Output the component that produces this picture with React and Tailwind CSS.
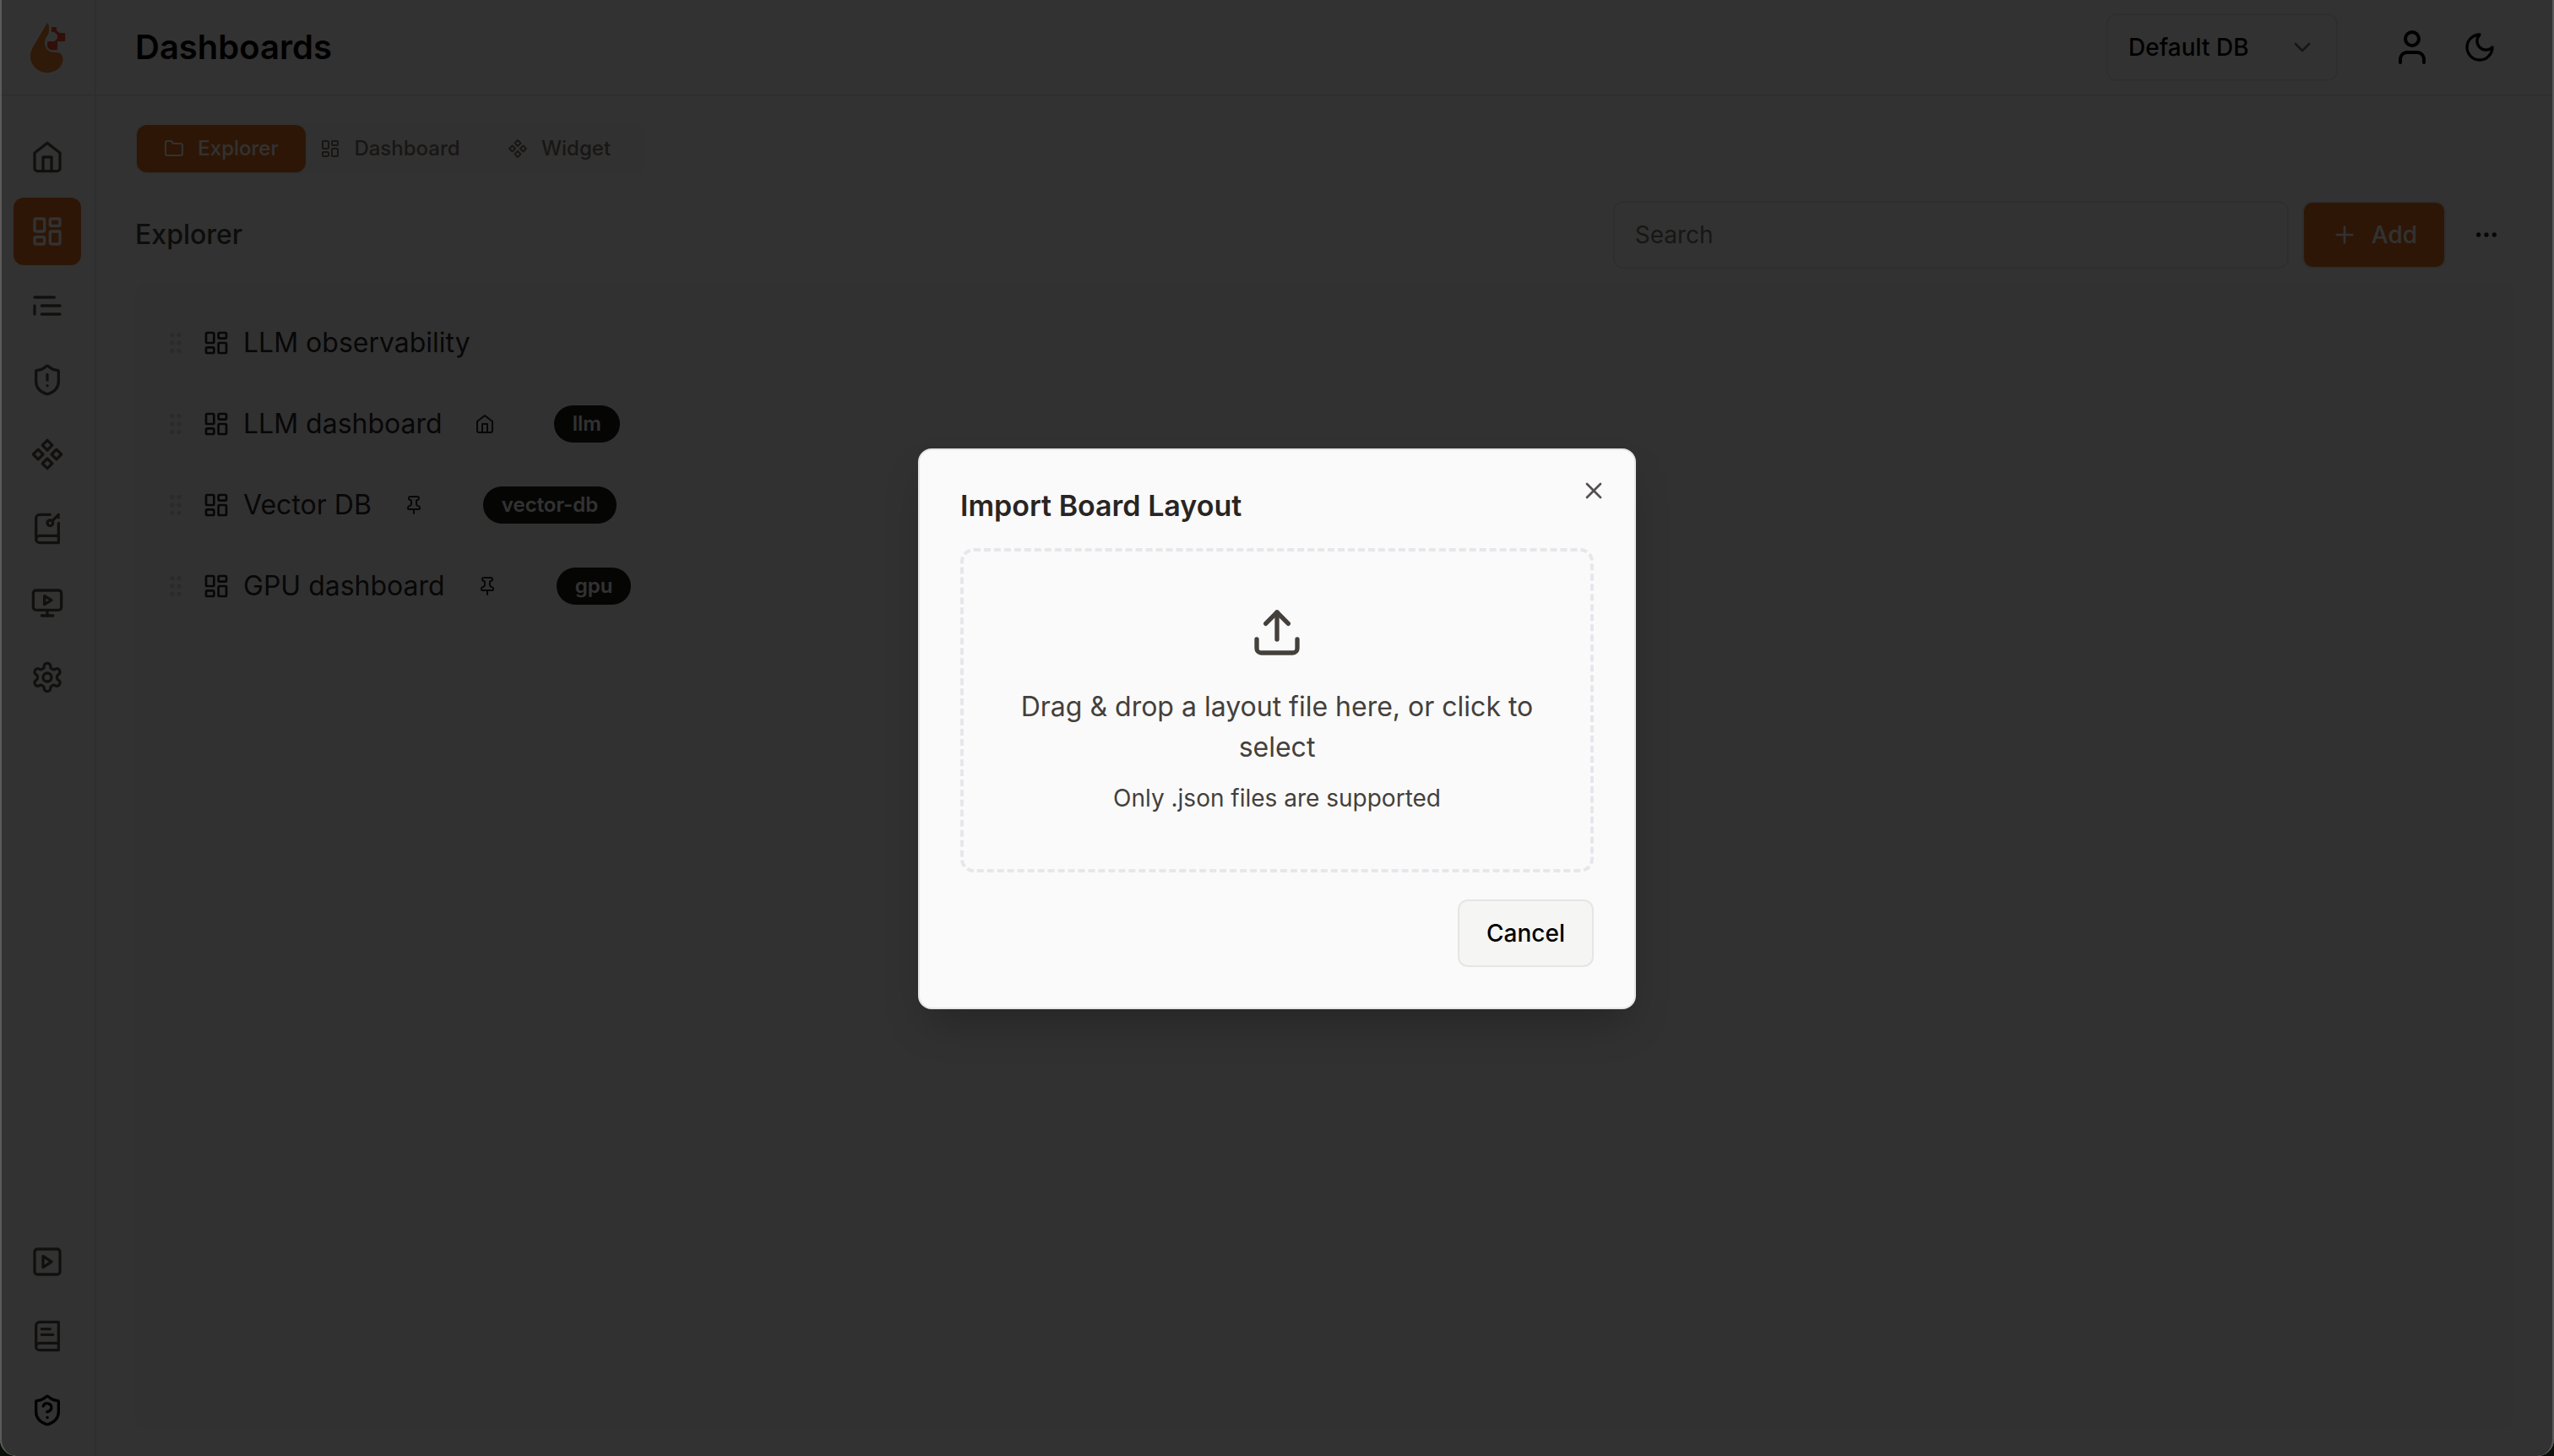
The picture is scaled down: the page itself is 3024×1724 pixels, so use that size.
import React from "react";

function Icon({ className = "size-10", children }) {
  return (
    <svg
      viewBox="0 0 24 24"
      fill="none"
      stroke="currentColor"
      strokeWidth="2"
      strokeLinecap="round"
      strokeLinejoin="round"
      aria-hidden="true"
      className={`shrink-0 ${className}`}
    >
      {children}
    </svg>
  );
}

const shield =
  "M20 13c0 5-3.5 7.5-7.66 8.95a1 1 0 0 1-.67-.01C7.5 20.5 4 18 4 13V6a1 1 0 0 1 1-1c2 0 4.5-1.2 6.24-2.72a1.17 1.17 0 0 1 1.52 0C14.51 3.81 17 5 19 5a1 1 0 0 1 1 1z";

const shapes = {
  home: (
    <>
      <path d="m3 9 9-7 9 7v11a2 2 0 0 1-2 2H5a2 2 0 0 1-2-2z" />
      <polyline points="9 22 9 12 15 12 15 22" />
    </>
  ),
  dashboard: (
    <>
      <rect width="7" height="9" x="3" y="3" rx="1" />
      <rect width="7" height="5" x="14" y="3" rx="1" />
      <rect width="7" height="9" x="14" y="12" rx="1" />
      <rect width="7" height="5" x="3" y="16" rx="1" />
    </>
  ),
  requests: (
    <>
      <path d="M17 6H3" />
      <path d="M21 12H8" />
      <path d="M21 18H8" />
      <path d="M3 12v6" />
    </>
  ),
  shieldAlert: (
    <>
      <path d={shield} />
      <path d="M12 8v4" />
      <path d="M12 16h.01" />
    </>
  ),
  component: (
    <>
      <path d="M5.5 8.5 9 12l-3.5 3.5L2 12l3.5-3.5Z" />
      <path d="m12 2 3.5 3.5L12 9 8.5 5.5 12 2Z" />
      <path d="M18.5 8.5 22 12l-3.5 3.5L15 12l3.5-3.5Z" />
      <path d="m12 15 3.5 3.5L12 22l-3.5-3.5L12 15Z" />
    </>
  ),
  bookKey: (
    <>
      <path d="m19 3 1 1" />
      <path d="m20 2-4.5 4.5" />
      <path d="M20 8v14H6.5a2.5 2.5 0 0 1 0-5H20" />
      <path d="M4 19.5v-15A2.5 2.5 0 0 1 6.5 2H14" />
      <circle cx="14" cy="8" r="2" />
    </>
  ),
  monitorPlay: (
    <>
      <path d="m10 7 5 3-5 3Z" />
      <rect width="20" height="14" x="2" y="3" rx="2" />
      <path d="M12 17v4" />
      <path d="M8 21h8" />
    </>
  ),
  settings: (
    <>
      <path d="M12.22 2h-.44a2 2 0 0 0-2 2v.18a2 2 0 0 1-1 1.73l-.43.25a2 2 0 0 1-2 0l-.15-.08a2 2 0 0 0-2.73.73l-.22.38a2 2 0 0 0 .73 2.73l.15.1a2 2 0 0 1 1 1.72v.51a2 2 0 0 1-1 1.74l-.15.09a2 2 0 0 0-.73 2.73l.22.38a2 2 0 0 0 2.73.73l.15-.08a2 2 0 0 1 2 0l.43.25a2 2 0 0 1 1 1.73V20a2 2 0 0 0 2 2h.44a2 2 0 0 0 2-2v-.18a2 2 0 0 1 1-1.73l.43-.25a2 2 0 0 1 2 0l.15.08a2 2 0 0 0 2.73-.73l.22-.39a2 2 0 0 0-.73-2.73l-.15-.08a2 2 0 0 1-1-1.74v-.5a2 2 0 0 1 1-1.74l.15-.09a2 2 0 0 0 .73-2.73l-.22-.38a2 2 0 0 0-2.73-.73l-.15.08a2 2 0 0 1-2 0l-.43-.25a2 2 0 0 1-1-1.73V4a2 2 0 0 0-2-2z" />
      <circle cx="12" cy="12" r="3" />
    </>
  ),
  squarePlay: (
    <>
      <rect width="18" height="18" x="3" y="3" rx="2" />
      <path d="m9 8 6 4-6 4Z" />
    </>
  ),
  bookText: (
    <>
      <path d="M4 19.5v-15A2.5 2.5 0 0 1 6.5 2H20v20H6.5a2.5 2.5 0 0 1 0-5H20" />
      <path d="M8 7h6" />
      <path d="M8 11h8" />
    </>
  ),
  shieldQuestion: (
    <>
      <path d={shield} />
      <path d="M9.1 9a3 3 0 0 1 5.82 1c0 2-3 3-3 3" />
      <path d="M12 17h.01" />
    </>
  ),
  folder: (
    <path d="M20 20a2 2 0 0 0 2-2V8a2 2 0 0 0-2-2h-7.9a2 2 0 0 1-1.69-.9L9.6 3.9A2 2 0 0 0 7.93 3H4a2 2 0 0 0-2 2v13a2 2 0 0 0 2 2Z" />
  ),
  user: (
    <>
      <path d="M19 21v-2a4 4 0 0 0-4-4H9a4 4 0 0 0-4 4v2" />
      <circle cx="12" cy="7" r="4" />
    </>
  ),
  moon: <path d="M12 3a6 6 0 0 0 9 9 9 9 0 1 1-9-9Z" />,
  chevron: <path d="m6 9 6 6 6-6" />,
  plus: (
    <>
      <path d="M5 12h14" />
      <path d="M12 5v14" />
    </>
  ),
  ellipsis: (
    <>
      <circle cx="12" cy="12" r="1" />
      <circle cx="19" cy="12" r="1" />
      <circle cx="5" cy="12" r="1" />
    </>
  ),
  grip: (
    <>
      <circle cx="9" cy="12" r="1" />
      <circle cx="9" cy="5" r="1" />
      <circle cx="9" cy="19" r="1" />
      <circle cx="15" cy="12" r="1" />
      <circle cx="15" cy="5" r="1" />
      <circle cx="15" cy="19" r="1" />
    </>
  ),
  pin: (
    <>
      <path d="M12 17v5" />
      <path d="M9 10.76a2 2 0 0 1-1.11 1.79l-1.78.9A2 2 0 0 0 5 15.24V16a1 1 0 0 0 1 1h12a1 1 0 0 0 1-1v-.76a2 2 0 0 0-1.11-1.79l-1.78-.9A2 2 0 0 1 15 10.76V7a1 1 0 0 1 1-1 2 2 0 0 0 0-4H8a2 2 0 0 0 0 4 1 1 0 0 1 1 1z" />
    </>
  ),
  upload: (
    <>
      <path d="M21 15v4a2 2 0 0 1-2 2H5a2 2 0 0 1-2-2v-4" />
      <polyline points="17 8 12 3 7 8" />
      <path d="M12 3v12" />
    </>
  ),
  close: (
    <>
      <path d="M18 6 6 18" />
      <path d="m6 6 12 12" />
    </>
  ),
};

function Logo() {
  return (
    <svg viewBox="0 0 80 80" className="size-20" role="img" aria-label="Logo">
      <path
        fill="#e87c2c"
        d="M40 11c1 1.5 2 3 2 5 0 4 .2 6-1 8.5-1.5 3-4 5.5-4 10 0 7 4.500 11.500 11 11.500h2.500c5 0 8 3.500 8 8C58.500 63 50 70 40 70c-11 0-20-8.500-20-19.500 0-5.500 2.200-9.500 5-14z"
      />
      <path
        fill="#f0502c"
        d="M46 16h4c.6 0 1 .4 1 1v3l3.500 3H60c.7 0 1.200.5 1.200 1.200v7.600c0 .7-.5 1.200-1.200 1.200h-8v9c0 .7-.5 1.200-1.200 1.200H46c-3.500 0-6-2.500-6-5.500v-3.500c0-.7.5-1.200 1.200-1.200h7.300l3.500-3.500v-4L48.500 22H46c-.6 0-1-.4-1-1v-4c0-.6.4-1 1-1z"
      />
    </svg>
  );
}

const mainNav = [
  ["Home", "home"],
  ["Dashboards", "dashboard"],
  ["Requests", "requests"],
  ["Exceptions", "shieldAlert"],
  ["Prompt hub", "component"],
  ["Vault", "bookKey"],
  ["Playground", "monitorPlay"],
  ["Settings", "settings"],
];

const footerNav = [
  ["Getting started", "squarePlay", "text-stone-600"],
  ["Documentation", "bookText", "text-stone-600"],
  ["Support", "shieldQuestion", "text-stone-950"],
];

function NavLink({ label, icon, className }) {
  return (
    <a
      href="#"
      aria-label={label}
      className={`flex size-20 items-center justify-center rounded-xl ${className}`}
    >
      <Icon>{shapes[icon]}</Icon>
    </a>
  );
}

function Sidebar() {
  return (
    <aside className="flex w-[114px] shrink-0 flex-col items-center border-r-2 border-stone-200">
      <div className="flex h-[114px] w-full shrink-0 items-center justify-center border-b-2 border-stone-200">
        <Logo />
      </div>
      <nav aria-label="Main" className="flex flex-1 flex-col gap-2 pt-8">
        {mainNav.map(([label, icon]) => (
          <NavLink
            key={label}
            label={label}
            icon={icon}
            className={label === "Dashboards" ? "bg-[#e17020] text-neutral-50" : "text-stone-600"}
          />
        ))}
      </nav>
      <nav aria-label="Help" className="flex flex-col gap-2 pb-3.5">
        {footerNav.map(([label, icon, className]) => (
          <NavLink key={label} label={label} icon={icon} className={className} />
        ))}
      </nav>
    </aside>
  );
}

function Header() {
  return (
    <header className="flex h-[114px] shrink-0 items-center border-b-2 border-stone-200 pr-12 pl-[46px]">
      <h1 className="flex-1 text-[40px] leading-[56px] font-semibold text-black">Dashboards</h1>
      <div className="relative">
        <select
          aria-label="Database"
          className="h-20 w-[274px] appearance-none rounded-xl border-2 border-stone-200 bg-transparent px-6 text-[28px] font-medium text-black"
        >
          <option>Default DB</option>
        </select>
        <span className="pointer-events-none absolute inset-y-0 right-[26px] flex items-center text-stone-500">
          <Icon className="size-8">{shapes.chevron}</Icon>
        </span>
      </div>
      <div className="ml-12 flex">
        <button type="button" aria-label="Account" className="flex size-20 items-center justify-center text-black">
          <Icon className="size-12">{shapes.user}</Icon>
        </button>
        <button type="button" aria-label="Toggle theme" className="flex size-20 items-center justify-center text-black">
          <Icon>{shapes.moon}</Icon>
        </button>
      </div>
    </header>
  );
}

const tabs = [
  ["Explorer", "folder"],
  ["Dashboard", "dashboard"],
  ["Widget", "component"],
];

function Tabs() {
  return (
    <div role="tablist" className="grid w-[604px] grid-cols-3 rounded-xl bg-stone-100 p-0.5">
      {tabs.map(([label, icon], i) => (
        <button
          key={label}
          type="button"
          role="tab"
          aria-selected={i === 0}
          className={`flex h-14 items-center justify-center gap-4 rounded-xl text-2xl font-medium ${
            i === 0 ? "bg-[#e17020] text-neutral-50 shadow-sm" : "text-stone-500"
          }`}
        >
          <Icon className="size-6">{shapes[icon]}</Icon>
          {label}
        </button>
      ))}
    </div>
  );
}

const boards = [
  { title: "LLM observability" },
  { title: "LLM dashboard", mark: "home", tag: "llm" },
  { title: "Vector DB", mark: "pin", tag: "vector-db" },
  { title: "GPU dashboard", mark: "pin", tag: "gpu" },
];

function BoardRow({ title, mark, tag }) {
  return (
    <li className="flex h-24 items-center px-8 text-stone-800">
      <Icon className="size-8 text-stone-300">{shapes.grip}</Icon>
      <a href="#" className="ml-4 flex items-center gap-4 text-[32px] leading-[48px]">
        <Icon className="size-8">{shapes.dashboard}</Icon>
        {title}
      </a>
      {mark && <Icon className="ml-[38px] size-6">{shapes[mark]}</Icon>}
      {tag && (
        <span className="ml-[70px] flex h-11 items-center rounded-full bg-stone-900 px-[22px] text-2xl font-semibold text-neutral-50">
          {tag}
        </span>
      )}
    </li>
  );
}

function ImportDialog() {
  return (
    <div
      role="dialog"
      aria-modal="true"
      aria-labelledby="import-title"
      className="relative flex w-[850px] flex-col gap-8 rounded-2xl border-2 border-stone-200 bg-neutral-50 p-12 shadow-2xl"
    >
      <h2 id="import-title" className="text-[34px] leading-9 font-semibold text-stone-800">
        Import Board Layout
      </h2>
      <button type="button" aria-label="Close" className="absolute top-8 right-8 text-stone-950 opacity-70">
        <Icon className="size-8">{shapes.close}</Icon>
      </button>
      <button
        type="button"
        className="flex flex-col items-center rounded-2xl border-4 border-dashed border-gray-200 p-16 text-stone-700"
      >
        <Icon className="size-16">{shapes.upload}</Icon>
        <span className="mt-8 text-[32px] leading-[48px]">
          Drag &amp; drop a layout file here, or click to select
        </span>
        <span className="mt-4 text-[28px] leading-10">Only .json files are supported</span>
      </button>
      <div className="flex justify-end">
        <button
          type="button"
          className="h-20 rounded-xl border-2 border-stone-200 bg-stone-100 px-8 text-[28px] font-medium text-black"
        >
          Cancel
        </button>
      </div>
    </div>
  );
}

export default function App() {
  return (
    <div className="h-screen bg-[#0b0f0a] font-['Inter',sans-serif]">
      <div className="relative h-full overflow-hidden rounded-b-[20px] bg-neutral-50">
        <div className="flex h-full">
          <Sidebar />
          <div className="flex min-w-0 flex-1 flex-col">
            <Header />
            <main className="flex flex-1 flex-col pt-8 pr-12 pb-8 pl-[46px]">
              <Tabs />
              <div className="mt-8 flex h-20 items-center gap-4">
                <h2 className="flex-1 text-[32px] leading-10 font-medium text-stone-700">Explorer</h2>
                <input
                  type="search"
                  aria-label="Search"
                  placeholder="Search"
                  className="h-20 w-[800px] rounded-xl border-2 border-stone-200 bg-transparent px-6 text-[28px] text-stone-800 placeholder:text-stone-500"
                />
                <button
                  type="button"
                  className="flex h-20 items-center gap-4 rounded-xl border-2 border-stone-200 bg-[#e17020] px-8 text-[28px] font-medium text-neutral-50"
                >
                  <Icon className="size-8">{shapes.plus}</Icon>
                  Add
                </button>
                <button type="button" aria-label="More actions" className="flex h-20 w-16 items-center justify-center text-stone-800">
                  <Icon className="size-8">{shapes.ellipsis}</Icon>
                </button>
              </div>
              <ul className="mt-4 flex-1 rounded-xl bg-stone-100 pt-6">
                {boards.map((board) => (
                  <BoardRow key={board.title} {...board} />
                ))}
              </ul>
            </main>
          </div>
        </div>
        <div className="absolute inset-0 flex items-center justify-center bg-black/80 pt-0.5">
          <ImportDialog />
        </div>
        <div className="pointer-events-none absolute inset-0 rounded-b-[20px] border-x-2 border-[#5a5a5a]" />
      </div>
    </div>
  );
}
